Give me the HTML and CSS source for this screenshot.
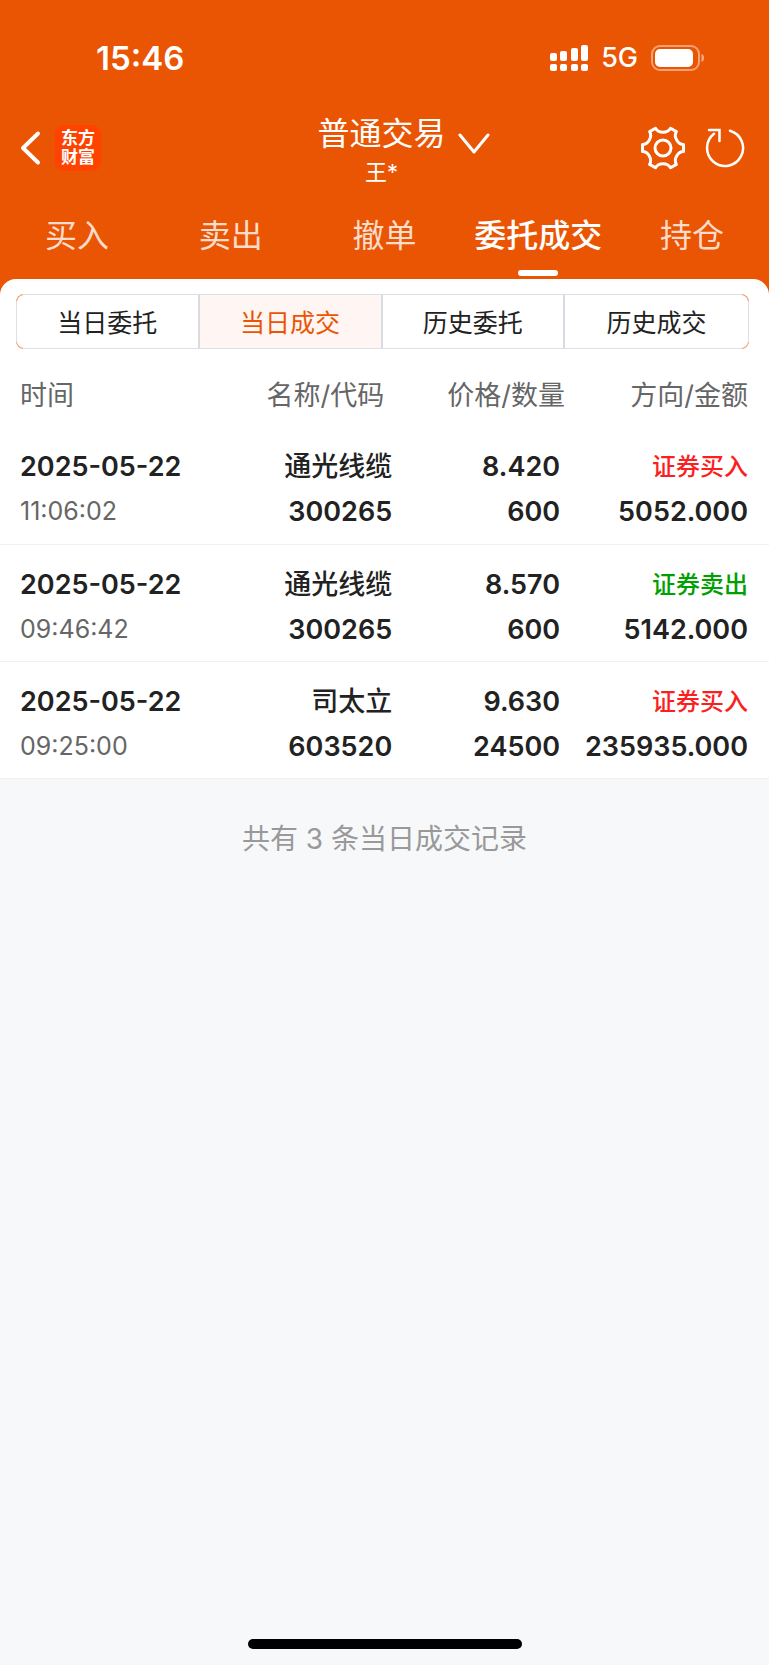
FILE: index.html
```html
<!DOCTYPE html>
<html lang="zh-CN">
  <head>
    <meta charset="UTF-8" />
    <meta name="viewport" content="width=device-width, initial-scale=1.0" />
    <title>当日成交</title>
    <link rel="stylesheet" href="styles.css">
  </head>
  <body>
    <header class="header">
      <div class="statusBar">
        <span class="clock">15:46</span>
        <div class="statusIcons">
          <svg width="38" height="28" viewBox="0 0 38 28" fill="#fff">
            <rect x="0" y="9" width="7" height="8" rx="2" />
            <rect x="10" y="7" width="7" height="10" rx="2" />
            <rect x="21" y="4" width="7" height="13" rx="2" />
            <rect x="31" y="1" width="7" height="16" rx="2" />
            <rect x="0" y="20" width="7" height="7" rx="2" />
            <rect x="10" y="20" width="7" height="7" rx="2" />
            <rect x="21" y="20" width="7" height="7" rx="2" />
            <rect x="31" y="20" width="7" height="7" rx="2" />
          </svg>
          <span class="network">5G</span>
          <svg width="54" height="26" viewBox="0 0 54 26">
            <rect x="1" y="1" width="47" height="24" rx="8" fill="none" stroke="#fff" stroke-opacity="0.45" stroke-width="2" />
            <rect x="4" y="4" width="38" height="18" rx="5" fill="#fff" />
            <path d="M50.500 9c3.500 1 3.500 7 0 8z" fill="#fff" fill-opacity="0.5" />
          </svg>
        </div>
      </div>

      <div class="navBar">
        <div class="navLeft">
          <button aria-label="返回">
            <svg width="22" height="36" viewBox="0 0 22 36" fill="none" stroke="#fff" stroke-width="4" stroke-linecap="round" stroke-linejoin="round">
              <path d="M18 3.500L3 18l15 14.500" />
            </svg>
          </button>
          <a class="logo" href="#">东方<br />财富</a>
        </div>
        <button class="account">
          <span class="accountText">
            <span class="accountTitle">普通交易</span>
            <span class="accountName">王*</span>
          </span>
          <svg width="32" height="22" viewBox="0 0 32 22" fill="none" stroke="#fff" stroke-width="3" stroke-linecap="round" stroke-linejoin="round">
            <path d="M2 2l14 17L30 2" />
          </svg>
        </button>
        <div class="navRight">
          <button aria-label="设置">
            <svg width="44" height="44" viewBox="0 0 44 44" fill="none" stroke="#fff" stroke-width="3" stroke-linejoin="round">
              <path d="M14.500 2.200C17.500 7.500 26.500 7.500 29.500 2.200L35.400 5.600C32.300 10.900 36.800 18.600 42.500 18.600V25.400C36.800 25.400 32.300 33.100 35.400 38.400L29.500 41.800C26.500 36.500 17.500 36.500 14.500 41.800L8.600 38.400C11.700 33.100 7.200 25.400 1.500 25.400V18.600C7.200 18.600 11.700 10.900 8.600 5.600Z" />
              <circle cx="22" cy="22" r="8" />
            </svg>
          </button>
          <button aria-label="刷新">
            <svg width="40" height="40" viewBox="0 0 40 40" fill="none" stroke="#fff" stroke-width="2.500" stroke-linecap="round">
              <path d="M25 2.700A18 18 0 1 1 9 5.800" />
              <path d="M4 2H14.500V13" />
            </svg>
          </button>
        </div>
      </div>

      <nav class="tabs">
        <a href="#">买入</a>
        <a href="#">卖出</a>
        <a href="#">撤单</a>
        <a href="#" class="active">委托成交</a>
        <a href="#">持仓</a>
      </nav>
    </header>

    <main class="panel">
      <div class="segment">
        <button>当日委托</button>
        <button class="selected">当日成交</button>
        <button>历史委托</button>
        <button>历史成交</button>
      </div>

      <table class="records">
        <thead>
          <tr>
            <th scope="col">时间</th>
            <th scope="col">名称/代码</th>
            <th scope="col">价格/数量</th>
            <th scope="col">方向/金额</th>
          </tr>
        </thead>
        <tbody>
          <tr>
            <td>2025-05-22<span class="time">11:06:02</span></td>
            <td><span class="name">通光线缆</span>300265</td>
            <td>8.420<br />600</td>
            <td><span class="side buy">证券买入</span>5052.000</td>
          </tr>
          <tr>
            <td>2025-05-22<span class="time">09:46:42</span></td>
            <td><span class="name">通光线缆</span>300265</td>
            <td>8.570<br />600</td>
            <td><span class="side sell">证券卖出</span>5142.000</td>
          </tr>
          <tr>
            <td>2025-05-22<span class="time">09:25:00</span></td>
            <td><span class="name">司太立</span>603520</td>
            <td>9.630<br />24500</td>
            <td><span class="side buy">证券买入</span>235935.000</td>
          </tr>
        </tbody>
      </table>
    </main>

    <p class="summary">共有 3 条当日成交记录</p>
    <div class="homeBar"></div>
  </body>
</html>
```
FILE: styles.css
```css
* {
  box-sizing: border-box;
}

body {
  margin: 0;
  min-height: 100vh;
  display: flex;
  flex-direction: column;
  background-color: #f7f8fa;
  color: #222;
  font-family: Inter, "Noto Sans CJK SC", sans-serif;
}

button {
  padding: 0;
  border: none;
  background: none;
  color: inherit;
  font: inherit;
  cursor: pointer;
}

a {
  color: inherit;
  text-decoration: none;
}

svg {
  display: block;
}

/* header */
.header {
  background-color: #ea5504;
  color: white;
  padding-bottom: 16px;
}

.statusBar {
  display: flex;
  justify-content: space-between;
  align-items: center;
  height: 108px;
  padding: 7px 64px 0 96px;
}

.clock {
  font-size: 33px;
  font-weight: 600;
}

.statusIcons {
  display: flex;
  align-items: center;
  gap: 13px;
}

.network {
  font-size: 27px;
  line-height: 32px;
  font-weight: 500;
}

.navBar {
  display: grid;
  grid-template-columns: 1fr auto 1fr;
  align-items: center;
  height: 80px;
  padding: 0 24px 0 20px;
}

.navLeft,
.navRight {
  display: flex;
  align-items: center;
  gap: 13px;
}

.navRight {
  justify-content: flex-end;
  gap: 20px;
}

.logo {
  width: 46px;
  height: 46px;
  padding: 4px 0;
  border-radius: 9px;
  background-color: #ff4200;
  font-size: 17px;
  line-height: 19px;
  font-weight: 700;
  text-align: center;
}

/* left padding balances the arrow so the name stays centered */
.account {
  display: flex;
  align-items: center;
  gap: 12px;
  padding-left: 42px;
}

.account svg {
  margin-bottom: 8px;
}

.accountText {
  display: flex;
  flex-direction: column;
  gap: 6px;
  padding-top: 10px;
}

.accountTitle {
  font-size: 32px;
  line-height: 32px;
}

.accountName {
  font-size: 22px;
  line-height: 32px;
}

.tabs {
  display: grid;
  grid-template-columns: repeat(5, 1fr);
  height: 91px;
  padding-top: 4px;
  font-size: 32px;
  line-height: 88px;
  text-align: center;
  color: #fcdccb;
}

.tabs .active {
  position: relative;
  color: white;
  font-weight: 500;
}

.tabs .active::after {
  content: "";
  position: absolute;
  left: 50%;
  bottom: 4px;
  width: 40px;
  height: 6px;
  margin-left: -20px;
  border-radius: 3px;
  background-color: white;
}

/* records */
.panel {
  margin-top: -16px;
  padding-top: 15px;
  border-radius: 16px 16px 0 0;
  background-color: white;
}

/* grey frame with orange corners */
.segment {
  display: grid;
  grid-template-columns: repeat(4, 1fr);
  height: 55px;
  margin: 0 20px 0 16px;
  border: 1px solid transparent;
  border-radius: 8px;
  background:
    linear-gradient(white, white) padding-box,
    linear-gradient(#dcdfe6, #dcdfe6) center / 100% calc(100% - 14px) no-repeat border-box,
    linear-gradient(#dcdfe6, #dcdfe6) center / calc(100% - 14px) 100% no-repeat border-box,
    linear-gradient(#ee9a6c, #ee9a6c) border-box;
  font-size: 25px;
}

.segment button {
  padding-bottom: 2px;
  border-right: 2px solid #d8dce2;
}

.segment button:last-child {
  border-right: none;
}

.segment .selected {
  background-color: #fff5f2;
  color: #ea5504;
}

.records {
  width: 100%;
  table-layout: fixed;
  border-collapse: collapse;
  text-align: right;
  font-size: 27px;
  line-height: 45px;
}

.records th {
  height: 78px;
  padding: 14px 0 0;
  color: #666;
  font-weight: 400;
}

.records td {
  height: 117px;
  padding: 17px 0 9px;
  border-bottom: 1px solid #f0f1f3;
  font-weight: 600;
}

.records th:nth-child(1),
.records td:nth-child(1) {
  width: 26%;
  padding-left: 20px;
  text-align: left;
}

.records th:nth-child(2) {
  width: 25%;
  padding-right: 8px;
}

.records th:nth-child(3) {
  width: 23%;
  padding-right: 4px;
}

.records td:nth-child(3) {
  padding-right: 9px;
}

.records th:nth-child(4),
.records td:nth-child(4) {
  padding-right: 21px;
}

.time,
.name,
.side {
  display: block;
}

.time {
  color: #666;
  font-size: 25px;
  font-weight: 400;
}

.name {
  font-weight: 500;
}

.side {
  font-size: 24px;
  font-weight: 500;
}

.buy {
  color: #fb1f1f;
}

.sell {
  color: #00a000;
}

.summary {
  margin: 40px 0;
  color: #999;
  font-size: 28px;
  line-height: 40px;
  text-align: center;
}

.homeBar {
  width: 274px;
  height: 10px;
  margin: auto auto 16px;
  border-radius: 5px;
  background-color: black;
}
```
